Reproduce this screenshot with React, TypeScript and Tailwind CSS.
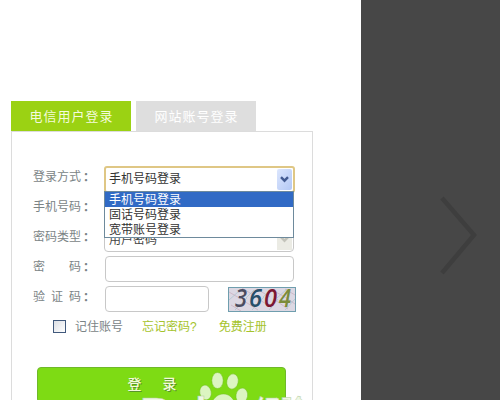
import { useState } from "react";

const loginTypes = ["手机号码登录", "固话号码登录", "宽带账号登录"];

interface FieldProps {
  label: string;
  children?: React.ReactNode;
}

function Field({ label, children }: FieldProps) {
  return (
    <div className="flex h-[30px] items-center">
      <div className="flex w-[72px] shrink-0 pb-[5px] text-[12px] leading-[16px] text-[#7b8486]">
        <span className="flex w-12 justify-between">
          {label.split("").map((char, i) => (
            <span key={i}>{char}</span>
          ))}
        </span>
        <span className="-ml-px w-3 font-['Noto_Sans_CJK_TC',sans-serif] font-bold">：</span>
      </div>
      {children}
    </div>
  );
}

function Chevron({ color }: { color: string }) {
  return (
    <svg width="9" height="7" viewBox="0 0 9 7" fill="none">
      <path d="M1 1.2 4.5 4.7 8 1.2" stroke={color} strokeWidth="2.4" />
    </svg>
  );
}

function Captcha() {
  return (
    <svg className="ml-[19px] h-[25px] w-[68px] shrink-0" viewBox="0 0 68 25">
      <rect x="0.5" y="0.5" width="67" height="24" fill="#dcd8e3" stroke="#6f9eae" />
      <g stroke="#c4a3b5" strokeWidth="0.8" opacity="0.7">
        <path d="M1 5l12 7M3 18l10 6M14 1l11 7M16 14l14 9M29 2l13 8M32 13l12 8M44 3l13 7M47 13l13 9M57 2l10 6M57 10l10 7" />
      </g>
      <g stroke="#9bbfca" strokeWidth="0.8" opacity="0.7">
        <path d="M1 13l9-8M7 23l12-12M18 11l8-8M24 23l12-13M35 10l9-8M41 23l9-11M49 11l10-9M57 23l10-11" />
      </g>
      <g fontFamily="'Open Sans', sans-serif" fontSize="26" fontStyle="italic" fontWeight="600">
        <text x="7" y="20" fill="#4b4c60" textLength="12" lengthAdjust="spacingAndGlyphs">3</text>
        <text x="21" y="20" fill="#284f69" textLength="13" lengthAdjust="spacingAndGlyphs">6</text>
        <text x="36" y="20" fill="#7c1833" textLength="13" lengthAdjust="spacingAndGlyphs">0</text>
        <text x="51" y="20" fill="#7b8c3b" textLength="12" lengthAdjust="spacingAndGlyphs">4</text>
      </g>
    </svg>
  );
}

function Watermark() {
  return (
    <svg className="absolute left-[130px] top-[365px] h-[35px] w-[183px]" viewBox="0 0 183 35">
      <g fill="#e4f8d0" opacity="0.92" stroke="#6fbb24" strokeWidth="0.5">
        <ellipse cx="75.5" cy="27.5" rx="5.7" ry="7.5" transform="rotate(-12 75.5 27.5)" />
        <ellipse cx="87.5" cy="15.5" rx="5.7" ry="8" />
        <ellipse cx="102.5" cy="16.5" rx="5.7" ry="7.7" transform="rotate(12 102.5 16.5)" />
        <ellipse cx="111.8" cy="30.5" rx="5.8" ry="7.5" transform="rotate(10 111.8 30.5)" />
        <path d="M80 40c3-5 6-11 13.500-11s10 6 13 11z" />
      </g>
      <g fill="#eef8e5" stroke="#b4cda0" strokeWidth="0.5" fontWeight="700">
        <text x="10" y="62" fontSize="43" fontFamily="Liberation Sans, sans-serif">Bai</text>
        <text x="125" y="54" fontSize="26" fontFamily="'Noto Sans CJK SC', sans-serif">经验</text>
      </g>
    </svg>
  );
}

export default function App() {
  const [selected, setSelected] = useState(0);
  const [open, setOpen] = useState(true);

  const choose = (index: number) => {
    setSelected(index);
    setOpen(false);
  };

  return (
    <div className="relative flex h-[400px] w-[500px] overflow-hidden bg-white font-['Liberation_Sans','Noto_Sans_CJK_SC',sans-serif]">
      <main className="w-[361px] shrink-0 pl-[11px] pt-[101px]">
        {/* Tabs */}
        <div className="flex h-[30px] gap-[5px] text-[13px] leading-[32px] tracking-[1px] text-white">
          <button className="w-[120px] bg-[#9bd213] pl-px text-[#f4fbdc]">电信用户登录</button>
          <button className="w-[120px] bg-[#dedede] pl-px">网站账号登录</button>
        </div>

        <form
          className="h-[280px] w-[302px] border border-[#dcdcdc] pl-[21px] pt-8"
          onSubmit={(e) => e.preventDefault()}
        >
          <Field label="登录方式">
            <div className="relative -ml-px h-[27px] w-[191px]">
              <button
                type="button"
                onClick={() => setOpen(!open)}
                className="flex h-[27px] w-[191px] items-center justify-between rounded-[3px] border-2 border-[#dfc785] bg-white pl-[3px] pr-px text-[12px] text-[#333]"
              >
                <span>{loginTypes[selected]}</span>
                <span className="flex h-[21px] w-[15px] items-center justify-center rounded-[2px] bg-linear-to-br from-[#dce6fd] to-[#b3c8f5]">
                  <Chevron color="#435b91" />
                </span>
              </button>
              {open && (
                <ul className="absolute left-0 top-[25px] z-10 w-[190px] border border-[#6e8a9c] bg-white text-[12px] leading-[17px] text-[#333]">
                  {loginTypes.map((type, i) => (
                    <li
                      key={type}
                      onClick={() => choose(i)}
                      className={`h-[15px] pl-1 ${i === selected ? "bg-[#316ac5] text-white" : ""}`}
                    >
                      {type}
                    </li>
                  ))}
                </ul>
              )}
            </div>
          </Field>
          <Field label="手机号码">
            <input className="h-[26px] w-[189px] rounded-[4px] border border-[#c8c8c8]" />
          </Field>
          <Field label="密码类型">
            <div className="-ml-px flex h-[25px] w-[190px] items-center justify-between rounded-[4px] border border-[#c8c8c8] pl-1 pr-px text-[12px] text-[#444]">
              <span className="pt-px">用户密码</span>
              <span className="flex h-[21px] w-[15px] items-center justify-center bg-[#ebebe4]">
                <Chevron color="#c3c3ba" />
              </span>
            </div>
          </Field>
          <Field label="密码">
            <input type="password" className="h-[26px] w-[189px] rounded-[4px] border border-[#c8c8c8]" />
          </Field>
          <Field label="验证码">
            <input className="h-[26px] w-[104px] shrink-0 rounded-[4px] border border-[#c8c8c8]" />
            <Captcha />
          </Field>

          <div className="flex h-[25px] items-center pl-5 text-[12px] text-[#7b8486]">
            <input
              type="checkbox"
              className="size-[13px] appearance-none border border-[#41597c] bg-linear-to-br from-[#dcdfe4] to-white"
            />
            <span className="ml-[9px]">记住账号</span>
            <a className="ml-[19px] text-[#a5c32c]">忘记密码?</a>
            <a className="ml-[22px] text-[#a5c32c]">免费注册</a>
          </div>

          <button className="ml-1 mt-[28px] flex h-[36px] w-[249px] justify-center gap-[21px] rounded-[4px] border border-[#6fb92a] bg-[#7edb14] pt-[6px] pr-[19px] text-[14px] font-medium leading-[20px] text-[#f3fbd9] [text-shadow:1px_1px_0_#58942a]">
            <span>登</span>
            <span>录</span>
          </button>
        </form>
      </main>

      <aside className="flex flex-1 items-start bg-[#474747] pl-[78px] pt-[194px]">
        <svg width="40" height="82" viewBox="0 0 40 82" fill="none">
          <path d="M3 4 35 41 3 79" stroke="#3e3e3e" strokeWidth="4.5" />
        </svg>
      </aside>

      <Watermark />
    </div>
  );
}
